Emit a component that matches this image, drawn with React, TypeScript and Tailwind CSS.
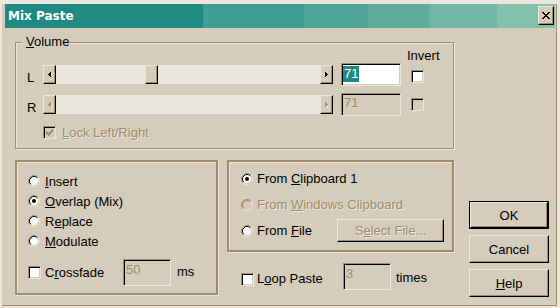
import React from "react";

const raised =
  "border border-t-[#eae6dd] border-l-[#eae6dd] border-r-black border-b-black shadow-[inset_-1px_-1px_0_#a28d68]";
const sunken =
  "border border-t-[#a28d68] border-l-[#a28d68] border-r-[#eae6dd] border-b-[#eae6dd] shadow-[inset_1px_1px_0_#000,inset_-1px_-1px_0_#d5ccbb]";
const grayText = "text-[#a28d68] [text-shadow:1px_1px_0_#eae6dd]";

function Tri({ dir, disabled }: { dir: "l" | "r"; disabled?: boolean }) {
  const cols = dir === "l" ? [[2, 1], [1, 3], [0, 5]] : [[0, 5], [1, 3], [2, 1]];
  const draw = (fill: string, off: number) =>
    cols.map(([y, h], i) => <rect key={fill + i} x={i + off} y={y + off} width={1} height={h} fill={fill} />);
  return (
    <svg width="4" height="6" viewBox="0 0 4 6" shapeRendering="crispEdges">
      {disabled ? (
        <>
          {draw("#eae6dd", 1)}
          {draw("#a28d68", 0)}
        </>
      ) : (
        draw("#000", 0)
      )}
    </svg>
  );
}

function Arrow({ dir, disabled }: { dir: "l" | "r"; disabled?: boolean }) {
  return (
    <div className={`w-[13px] h-[19px] shrink-0 bg-[#d5ccbb] ${raised} flex items-center justify-center`}>
      <Tri dir={dir} disabled={disabled} />
    </div>
  );
}

function Slider({ thumb, disabled }: { thumb?: boolean; disabled?: boolean }) {
  return (
    <div className="flex w-[290px] h-[19px]">
      <Arrow dir="l" disabled={disabled} />
      <div className="flex-1 bg-[#eae6dd]">
        {thumb && <div className={`ml-[89px] w-[13px] h-[19px] bg-[#d5ccbb] ${raised}`} />}
      </div>
      <Arrow dir="r" disabled={disabled} />
    </div>
  );
}

function CheckMark({ color }: { color: string }) {
  const ys = [2, 3, 4, 3, 2, 1, 0];
  return (
    <svg width="7" height="7" viewBox="0 0 7 7" shapeRendering="crispEdges">
      {ys.map((y, i) => (
        <rect key={i} x={i} y={y} width={1} height={3} fill={color} />
      ))}
    </svg>
  );
}

function Check({ checked, disabled }: { checked?: boolean; disabled?: boolean }) {
  return (
    <div
      className={`w-[13px] h-[13px] shrink-0 ${sunken} ${
        disabled ? "bg-[#d5ccbb]" : "bg-white"
      } flex items-center justify-center`}
    >
      {checked && <CheckMark color={disabled ? "#a28d68" : "#000"} />}
    </div>
  );
}

function Radio({ checked, disabled }: { checked?: boolean; disabled?: boolean }) {
  return (
    <svg width="12" height="12" viewBox="0 0 12 12" className="shrink-0">
      <circle cx="6" cy="6" r="4.5" fill={disabled ? "#d5ccbb" : "#fff"} />
      <path d="M2.11 9.89A5.5 5.5 0 0 1 9.89 2.11" fill="none" stroke="#a28d68" />
      <path d="M9.89 2.11A5.5 5.5 0 0 1 2.11 9.89" fill="none" stroke="#eae6dd" />
      <path d="M2.82 9.18A4.5 4.5 0 0 1 9.18 2.82" fill="none" stroke={disabled ? "#a28d68" : "#000"} />
      <path d="M9.18 2.82A4.5 4.5 0 0 1 2.82 9.18" fill="none" stroke="#d5ccbb" />
      {checked && <circle cx="6" cy="6" r="2" fill="#000" />}
    </svg>
  );
}

function CloseGlyph() {
  const rows: number[][][] = [
    [[0, 2], [6, 2]],
    [[1, 2], [5, 2]],
    [[2, 4]],
    [[3, 2]],
    [[2, 4]],
    [[1, 2], [5, 2]],
    [[0, 2], [6, 2]],
  ];
  return (
    <svg width="8" height="7" viewBox="0 0 8 7" shapeRendering="crispEdges">
      {rows.map((r, y) => r.map(([x, w], j) => <rect key={y + "-" + j} x={x} y={y} width={w} height={1} fill="#000" />))}
    </svg>
  );
}

export default function App() {
  return (
    <div className="w-[560px] h-[308px] overflow-hidden bg-[#eae6dd] pt-[4px] pl-[2px] pr-[3px] pb-[2px] font-['Liberation_Sans',Arial,sans-serif] text-[13px] leading-[15px] text-black">
      <div className="h-full bg-[#d5ccbb] border-r border-b border-[#a28d68] pl-[3px] flex flex-col">
        {/* Title bar */}
        <div className="w-[550px] h-[24px] shrink-0 flex items-start bg-[linear-gradient(to_right,#1e8a82_0px,#1e8a82_198px,#3f9e92_198px,#3f9e92_299px,#4ea596_299px,#4ea596_363px,#60ad9e_363px,#60ad9e_424px,#72b6a5_424px,#72b6a5_492px,#85c0ad_492px)]">
          <span className="pl-[3px] leading-[24px] text-white font-bold text-[12px] font-['DejaVu_Sans',sans-serif]">
            Mix Paste
          </span>
          <div className={`ml-auto mr-[1px] mt-[2px] w-[16px] h-[19px] bg-[#d5ccbb] ${raised} flex items-center justify-center`}>
            <CloseGlyph />
          </div>
        </div>

        {/* Body */}
        <div className="flex pl-[10px] pt-[14px]">
          <div className="flex flex-col w-[439px]">
            {/* Volume group */}
            <div className="relative w-[439px] h-[107px] border border-[#a28d68] shadow-[inset_1px_1px_0_#eae6dd,1px_1px_0_#eae6dd] pl-[11px] pt-[5px]">
              <span className="absolute left-[6px] -top-[9px] bg-[#d5ccbb] pl-[4px] pr-[1px]">
                <span className="underline">V</span>olume
              </span>
              <div className="ml-[380px] h-[15px]">Invert</div>
              <div className="flex items-start h-[23px]">
                <div className="w-[16px] mt-[7px]">L</div>
                <div className="mt-[2px]">
                  <Slider thumb />
                </div>
                <div className={`ml-[8px] w-[60px] h-[23px] ${sunken} bg-white pl-[1px] pt-[2px]`}>
                  <span className="inline-block bg-[#1e8a82] text-white leading-[16px] px-[1px]">71</span>
                </div>
                <div className="ml-[10px] mt-[7px]">
                  <Check />
                </div>
              </div>
              <div className="flex items-start h-[23px] mt-[7px]">
                <div className="w-[16px] mt-[7px]">R</div>
                <div className="mt-[2px]">
                  <Slider disabled />
                </div>
                <div className={`ml-[8px] w-[60px] h-[23px] ${sunken} bg-[#d5ccbb] pl-[2px] pt-[1px] text-[#a28d68]`}>
                  71
                </div>
                <div className="ml-[10px] mt-[5px]">
                  <Check disabled />
                </div>
              </div>
              <div className="flex items-center h-[15px] mt-[9px] pl-[16px]">
                <Check checked disabled />
                <span className={`ml-[6px] ${grayText}`}>
                  <span className="underline">L</span>ock Left/Right
                </span>
              </div>
            </div>

            {/* Lower row */}
            <div className="flex mt-[11px]">
              <div className="w-[203px] h-[135px] border-2 border-[#a28d68] shadow-[inset_1px_1px_0_#eae6dd,1px_1px_0_#eae6dd] pl-[11px] pt-[9px] flex flex-col">
                <div className="flex items-center h-[20px]">
                  <Radio />
                  <span className="ml-[5px]">
                    <span className="underline">I</span>nsert
                  </span>
                </div>
                <div className="flex items-center h-[20px]">
                  <Radio checked />
                  <span className="ml-[5px]">
                    <span className="underline">O</span>verlap (Mix)
                  </span>
                </div>
                <div className="flex items-center h-[20px]">
                  <Radio />
                  <span className="ml-[5px]">
                    R<span className="underline">e</span>place
                  </span>
                </div>
                <div className="flex items-center h-[20px]">
                  <Radio />
                  <span className="ml-[5px]">
                    <span className="underline">M</span>odulate
                  </span>
                </div>
                <div className="flex items-start h-[27px] mt-[8px]">
                  <div className="mt-[7px]">
                    <Check />
                  </div>
                  <span className="ml-[4px] mt-[6px] w-[78px]">
                    C<span className="underline">r</span>ossfade
                  </span>
                  <div className={`w-[48px] h-[27px] ${sunken} bg-[#d5ccbb] pl-[2px] pt-[2px] text-[#a28d68]`}>50</div>
                  <span className="ml-[6px] mt-[5px]">ms</span>
                </div>
              </div>

              <div className="ml-[9px] w-[227px] flex flex-col">
                <div className="h-[92px] border-2 border-[#a28d68] shadow-[inset_1px_1px_0_#eae6dd,1px_1px_0_#eae6dd] pl-[12px] pt-[5px] flex flex-col gap-[3px]">
                  <div className="flex items-center h-[23px]">
                    <Radio checked />
                    <span className="ml-[4px]">
                      From <span className="underline">C</span>lipboard 1
                    </span>
                  </div>
                  <div className="flex items-center h-[23px]">
                    <Radio disabled />
                    <span className={`ml-[4px] ${grayText}`}>
                      From <span className="underline">W</span>indows Clipboard
                    </span>
                  </div>
                  <div className="flex items-center h-[23px]">
                    <Radio />
                    <span className="ml-[4px] w-[80px]">
                      From <span className="underline">F</span>ile
                    </span>
                    <div className={`w-[107px] h-[23px] bg-[#d5ccbb] ${raised} flex items-center justify-center ${grayText}`}>
                      <span>
                        S<span className="underline">e</span>lect File...
                      </span>
                    </div>
                  </div>
                </div>
                <div className="flex items-start h-[27px] mt-[11px] pl-[14px]">
                  <div className="mt-[10px]">
                    <Check />
                  </div>
                  <span className="ml-[3px] mt-[8px] w-[86px]">
                    L<span className="underline">o</span>op Paste
                  </span>
                  <div className={`w-[48px] h-[27px] ${sunken} bg-[#d5ccbb] pl-[2px] pt-[2px] text-[#a28d68]`}>3</div>
                  <span className="ml-[5px] mt-[7px]">times</span>
                </div>
              </div>
            </div>
          </div>

          {/* Buttons */}
          <div className="ml-[15px] pt-[159px] flex flex-col gap-[6px]">
            <div className="w-[80px] h-[28px] border border-black">
              <div className={`h-full bg-[#d5ccbb] ${raised} flex items-center justify-center`}>OK</div>
            </div>
            <div className={`w-[80px] h-[28px] bg-[#d5ccbb] ${raised} flex items-center justify-center`}>Cancel</div>
            <div className={`w-[80px] h-[28px] bg-[#d5ccbb] ${raised} flex items-center justify-center`}>
              <span>
                <span className="underline">H</span>elp
              </span>
            </div>
          </div>
        </div>
      </div>
    </div>
  );
}
